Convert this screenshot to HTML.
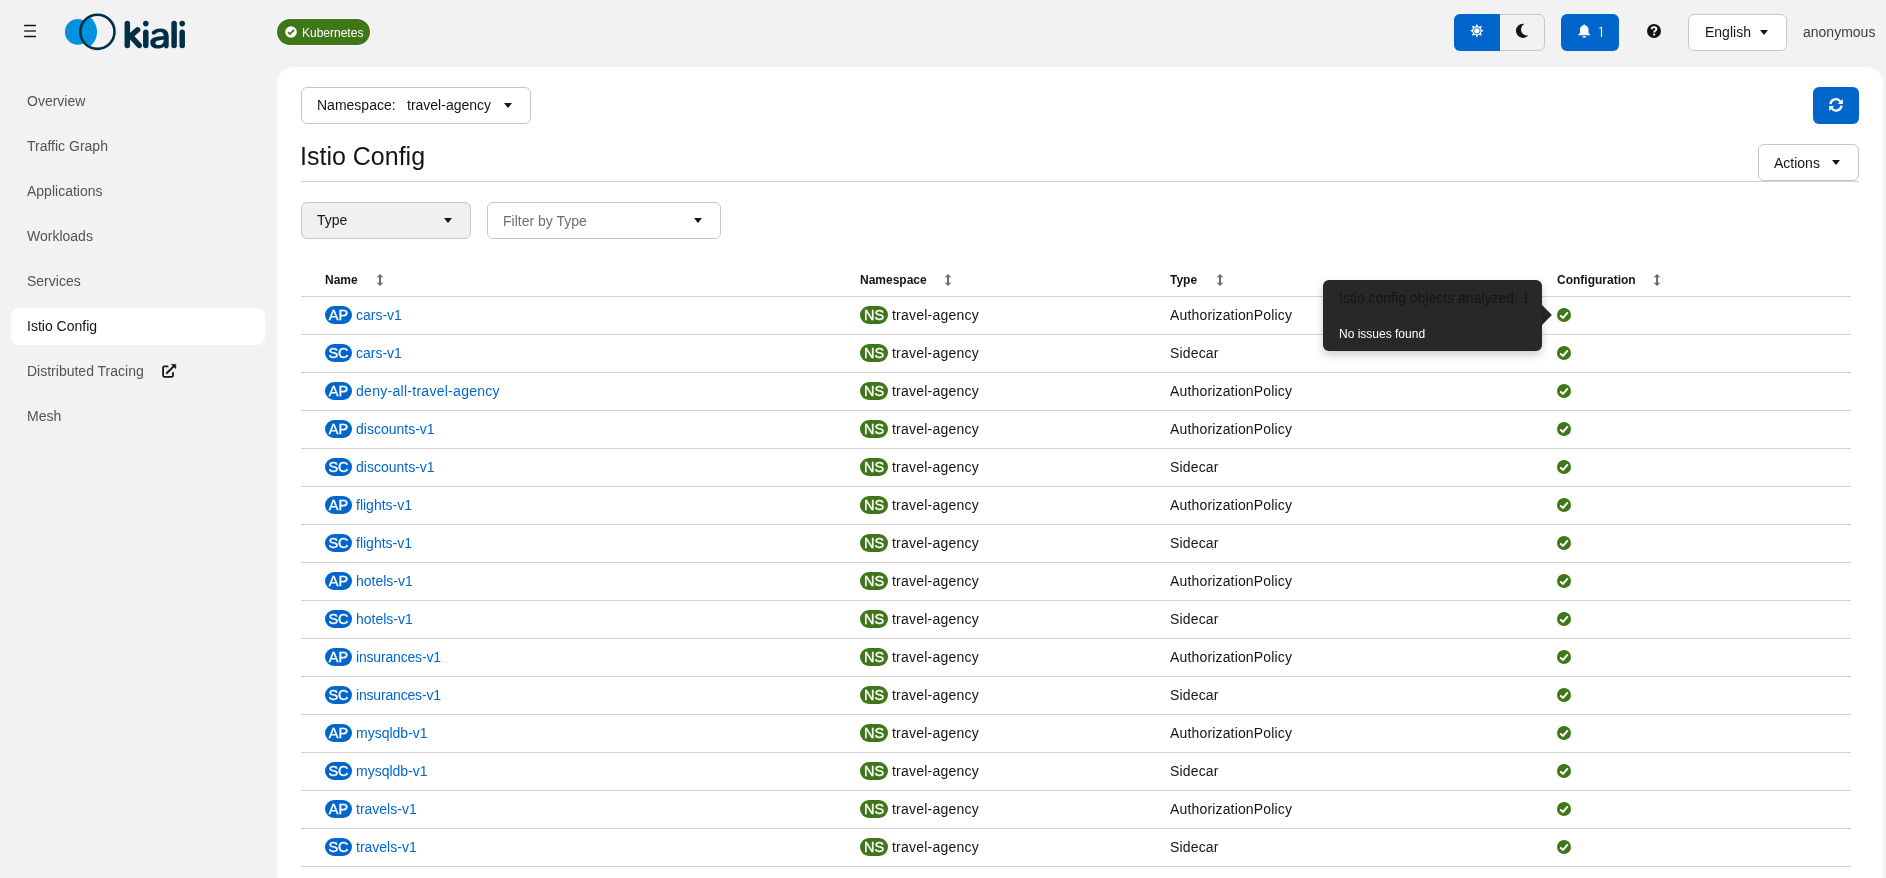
<!DOCTYPE html>
<html><head><meta charset="utf-8">
<style>
*{box-sizing:border-box;margin:0;padding:0}
html,body{width:1886px;height:878px;overflow:hidden;background:#f2f2f2;font-family:"Liberation Sans",sans-serif;color:#151515}
.a{position:absolute}
.t{position:absolute;white-space:nowrap;line-height:1}
.card{position:absolute;left:277px;top:67px;width:1606px;height:900px;background:#fff;border-radius:16px 16px 0 0}
.nav{position:absolute;left:27px;font-size:14px;color:#515457;white-space:nowrap;line-height:1}
.btnbox{position:absolute;border:1px solid #c7c7c7;border-radius:6px;background:#fff}
.caret{position:absolute;width:0;height:0;border-left:4px solid transparent;border-right:4px solid transparent;border-top:5px solid #151515}
.hline{position:absolute;left:301px;width:1550px;height:1px;background:#d2d2d2}
.th{position:absolute;font-size:12px;font-weight:bold;line-height:1;white-space:nowrap;color:#151515}
.badge{position:absolute;height:18px;border-radius:9px;color:#fff;font-size:14.5px;line-height:19px;text-align:center;-webkit-text-stroke:0.35px #fff}
.ap{background:#0066cc;width:27px;left:325px}
.ns{background:#3e7618;width:28px;left:860px}
.lnk{position:absolute;left:356px;font-size:14px;color:#0066cc;line-height:1;white-space:nowrap}
.nst{position:absolute;left:892px;font-size:14px;color:#151515;line-height:1;white-space:nowrap;letter-spacing:0.23px}
.typ{position:absolute;left:1170px;font-size:14px;color:#151515;line-height:1;white-space:nowrap;letter-spacing:0.16px}
.chk{position:absolute;left:1557px;width:14px;height:14px}
.sort{position:absolute;width:6px;height:12px}
</style></head>
<body><div id="app" style="position:absolute;left:0;top:0;width:1886px;height:878px;will-change:transform">
<!-- header -->
<svg class="a" style="left:18px;top:18px" width="26" height="26" viewBox="0 0 26 26"><g stroke="#151515" stroke-width="1.5" stroke-linecap="round"><path d="M6.7 7.4H17.4"/><path d="M6.7 12.9H17.4" stroke="#333"/><path d="M6.7 18.5H17.4"/></g></svg>

<svg class="a" style="left:0;top:0" width="200" height="64" viewBox="0 0 200 64">
  <defs><clipPath id="ringclip"><circle cx="97.4" cy="31.8" r="16"/></clipPath></defs>
  <circle cx="77.8" cy="31.9" r="12.9" fill="#0093dd"/>
  <circle cx="78.4" cy="31.8" r="18.7" fill="#0093dd" clip-path="url(#ringclip)"/>
  <circle cx="97.4" cy="31.8" r="17.1" fill="none" stroke="#012f47" stroke-width="2.6"/>
  <g fill="none" stroke="#012f47" stroke-width="5.5" stroke-linecap="round" stroke-linejoin="round">
    <path d="M127.3 23.6V45.4"/>
    <path d="M130 36.5L137.6 29.8"/>
    <path d="M132.5 38.2L139.2 45.4"/>
    <path d="M145.8 32.3V45.4"/>
    <path d="M174.1 23.6V45.4"/>
    <path d="M182.2 32.3V45.4"/>
  </g>
  <path fill="#012f47" fill-rule="evenodd" d="M151.8 33.6C151.5 32.3 152.3 31.3 153.5 30.6C155.3 29.3 157.3 28.4 160 28.4C165.5 28.4 168.7 31 168.7 36.5V45.8C168.7 47.3 167.7 48.4 166.4 48.4C165.2 48.4 164.4 47.6 164.2 46.4C162.5 47.8 160.2 48.6 157.3 48.6C153 48.6 150.3 46.3 150.3 42.6C150.3 38.6 153.8 37.2 158.5 36.6L163.7 35.9C163.6 33.4 162.3 32.1 160.2 32.1C158.2 32.1 156.8 32.8 155.3 34.1C154.2 35 152.3 34.9 151.8 33.6Z M163.6 39.5L158.6 40.4C156.7 40.8 155.4 41.4 155.4 42.9C155.4 44.2 156.5 45.1 158.3 45.1C161.6 45.1 163.6 43.3 163.6 40.9Z"/>
  <circle cx="145.8" cy="23.6" r="2.8" fill="#012f47"/>
  <circle cx="182.2" cy="23.6" r="2.8" fill="#012f47"/>
</svg>

<div class="a" style="left:277px;top:19px;width:93px;height:26px;border-radius:13px;background:#3e7618;box-shadow:0 0 0 1px rgba(255,255,255,0.7)"></div>
<svg class="a" style="left:285px;top:26px" width="12" height="12" viewBox="0 0 12 12"><circle cx="6" cy="6" r="5.8" fill="#fff"/><path d="M3 6.2 L5 8.1 L9 3.9" fill="none" stroke="#3e7618" stroke-width="1.8"/></svg>
<div class="t" style="left:302px;top:27px;font-size:12px;color:#fff">Kubernetes</div>

<div class="a" style="left:1454px;top:14px;width:91px;height:37px;border:1px solid #c7c7c7;border-radius:6px;background:#f2f2f2"></div>
<div class="a" style="left:1454px;top:14px;width:46px;height:37px;background:#0066cc;border-radius:6px 0 0 6px"></div>
<svg class="a" style="left:1465px;top:19px" width="24" height="24" viewBox="0 0 24 24"><g fill="#fff" transform="translate(11.9 11.8)"><polygon points="0,-7 1.5,-3.5 -1.5,-3.5"/><polygon points="0,7 1.5,3.5 -1.5,3.5"/><polygon points="-7,0 -3.5,1.5 -3.5,-1.5"/><polygon points="7,0 3.5,1.5 3.5,-1.5"/><polygon points="-5,-5 -1.4,-3.7 -3.7,-1.4"/><polygon points="5,-5 1.4,-3.7 3.7,-1.4"/><polygon points="-5,5 -1.4,3.7 -3.7,1.4"/><polygon points="5,5 1.4,3.7 3.7,1.4"/><circle r="4.6"/></g><circle cx="11.9" cy="11.8" r="3.2" fill="none" stroke="#0066cc" stroke-width="0.9"/></svg>
<svg class="a" style="left:1510px;top:20px" width="24" height="24" viewBox="0 0 24 24"><defs><mask id="moonm"><rect width="24" height="24" fill="#fff"/><circle cx="17" cy="9.5" r="6" fill="#000"/></mask></defs><circle cx="13" cy="10.8" r="7.1" fill="#151515" mask="url(#moonm)"/></svg>

<div class="a" style="left:1561px;top:14px;width:58px;height:37px;border-radius:6px;background:#0066cc"></div>
<svg class="a" style="left:1578px;top:24px" width="12.5" height="14.3" viewBox="0 0 14 16"><path d="M7 0.5c.8 0 1.2.5 1.2 1.2 2.4.5 3.6 2.4 3.6 4.8v3.2l1.8 2.2v.8H.4v-.8l1.8-2.2V6.5c0-2.4 1.2-4.3 3.6-4.8C5.8 1 6.2.5 7 .5z M5 13.6h4c0 1-.9 1.8-2 1.8s-2-.8-2-1.8z" fill="#fff"/></svg>
<svg class="a" style="left:1596px;top:25px" width="10" height="14" viewBox="0 0 10 14"><path d="M5.5 2V12" stroke="#fff" stroke-width="1.2" fill="none"/><path d="M5.7 2.1L3.3 3.4" stroke="#fff" stroke-width="1" fill="none"/></svg>

<svg class="a" style="left:1647px;top:24px" width="14" height="14" viewBox="0 0 14 14"><circle cx="7" cy="7" r="7" fill="#151515"/><path d="M4.7 5.3C4.7 3.9 5.7 3.1 7 3.1C8.4 3.1 9.4 3.9 9.4 5.1C9.4 6.6 7.1 6.8 7.1 8.4" fill="none" stroke="#fff" stroke-width="1.9"/><circle cx="7.1" cy="10.6" r="1.15" fill="#fff"/></svg>

<div class="btnbox" style="left:1688px;top:14px;width:99px;height:37px"></div>
<div class="t" style="left:1705px;top:25px;font-size:14px">English</div>
<div class="caret" style="left:1760px;top:30px"></div>
<div class="t" style="left:1803px;top:25px;font-size:14px;color:#3c3f42">anonymous</div>

<!-- sidebar -->
<div class="nav" style="top:94px">Overview</div>
<div class="nav" style="top:139px">Traffic Graph</div>
<div class="nav" style="top:184px">Applications</div>
<div class="nav" style="top:229px">Workloads</div>
<div class="nav" style="top:274px">Services</div>
<div class="a" style="left:11px;top:308px;width:254px;height:37px;border-radius:8px;background:#fff"></div>
<div class="nav" style="top:319px;color:#151515">Istio Config</div>
<div class="nav" style="top:364px">Distributed Tracing</div>
<svg class="a" style="left:155px;top:358px" width="30" height="27" viewBox="0 0 30 27"><path d="M12.6 8.4H9.3Q8.1 8.4 8.1 9.6V17.6Q8.1 18.8 9.3 18.8H16.8Q18 18.8 18 17.6V15" fill="none" stroke="#151515" stroke-width="1.8" stroke-linecap="round"/><path d="M11.7 15.2L18.6 8.4" stroke="#151515" stroke-width="1.9" stroke-linecap="round"/><path d="M16.4 6.4H20.8V10.7Z" fill="#151515" stroke="#151515" stroke-width="0.6" stroke-linejoin="round"/></svg>
<div class="nav" style="top:409px">Mesh</div>

<!-- card -->
<div class="card"></div>
<div class="btnbox" style="left:301px;top:87px;width:230px;height:37px"></div>
<div class="t" style="left:317px;top:98px;font-size:14px">Namespace:</div>
<div class="t" style="left:407px;top:98px;font-size:14px">travel-agency</div>
<div class="caret" style="left:504px;top:103px"></div>

<div class="a" style="left:1813px;top:87px;width:46px;height:37px;border-radius:6px;background:#0066cc"></div>
<svg class="a" style="left:1820px;top:92px" width="32" height="28" viewBox="0 0 32 28"><g fill="none" stroke="#fff" stroke-width="2.3"><path d="M10.5 12.2A5.45 5.45 0 0 1 20.4 9.6"/><path d="M21.5 13.6A5.45 5.45 0 0 1 11.6 16.2"/></g><g fill="#fff"><polygon points="22.8,6.9 22.8,11.9 17.8,11.9"/><polygon points="9.2,18.9 9.2,13.9 14.2,13.9"/></g></svg>

<div class="t" style="left:300px;top:144px;font-size:25px;color:#151515">Istio Config</div>
<div class="btnbox" style="left:1758px;top:144px;width:101px;height:37px"></div>
<div class="t" style="left:1774px;top:156px;font-size:14px">Actions</div>
<div class="caret" style="left:1832px;top:160px"></div>
<div class="a" style="left:301px;top:181px;width:1558px;height:1px;background:#d2d2d2"></div>

<div class="btnbox" style="left:301px;top:202px;width:170px;height:37px;background:#f0f0f0"></div>
<div class="t" style="left:317px;top:213px;font-size:14px">Type</div>
<div class="caret" style="left:444px;top:218px"></div>
<div class="btnbox" style="left:487px;top:202px;width:234px;height:37px"></div>
<div class="t" style="left:503px;top:214px;font-size:14px;color:#6a6e73">Filter by Type</div>
<div class="caret" style="left:694px;top:218px"></div>

<!-- table header -->
<div class="th" style="left:325px;top:274px">Name</div>
<div class="th" style="left:860px;top:274px">Namespace</div>
<div class="th" style="left:1170px;top:274px">Type</div>
<div class="th" style="left:1557px;top:274px">Configuration</div>
<div id="sorts"><svg class="sort" style="left:376px;top:274px;width:8px" viewBox="-1 0 8 12"><path d="M3 0 L6.3 3.3 H4 V8.7 H6.3 L3 12 L-0.3 8.7 H2 V3.3 H-0.3Z" fill="#6e6e6e"/></svg><svg class="sort" style="left:944px;top:274px;width:8px" viewBox="-1 0 8 12"><path d="M3 0 L6.3 3.3 H4 V8.7 H6.3 L3 12 L-0.3 8.7 H2 V3.3 H-0.3Z" fill="#6e6e6e"/></svg><svg class="sort" style="left:1216px;top:274px;width:8px" viewBox="-1 0 8 12"><path d="M3 0 L6.3 3.3 H4 V8.7 H6.3 L3 12 L-0.3 8.7 H2 V3.3 H-0.3Z" fill="#6e6e6e"/></svg><svg class="sort" style="left:1653px;top:274px;width:8px" viewBox="-1 0 8 12"><path d="M3 0 L6.3 3.3 H4 V8.7 H6.3 L3 12 L-0.3 8.7 H2 V3.3 H-0.3Z" fill="#6e6e6e"/></svg></div>
<div class="hline" style="top:296px"></div>
<div id="rows">
<div class="badge ap" style="top:306px">AP</div><div class="lnk" style="top:308px">cars-v1</div><div class="badge ns" style="top:306px">NS</div><div class="nst" style="top:308px">travel-agency</div><div class="typ" style="top:308px">AuthorizationPolicy</div><svg class="chk" style="top:308px" viewBox="0 0 14 14"><circle cx="7" cy="7" r="7" fill="#3e7618"/><path d="M3.2 7.4 L6 9.9 L10.8 4.3" fill="none" stroke="#fff" stroke-width="2"/></svg><div class="hline" style="top:334px"></div>
<div class="badge ap" style="top:344px">SC</div><div class="lnk" style="top:346px">cars-v1</div><div class="badge ns" style="top:344px">NS</div><div class="nst" style="top:346px">travel-agency</div><div class="typ" style="top:346px">Sidecar</div><svg class="chk" style="top:346px" viewBox="0 0 14 14"><circle cx="7" cy="7" r="7" fill="#3e7618"/><path d="M3.2 7.4 L6 9.9 L10.8 4.3" fill="none" stroke="#fff" stroke-width="2"/></svg><div class="hline" style="top:372px"></div>
<div class="badge ap" style="top:382px">AP</div><div class="lnk" style="top:384px;letter-spacing:0.28px">deny-all-travel-agency</div><div class="badge ns" style="top:382px">NS</div><div class="nst" style="top:384px">travel-agency</div><div class="typ" style="top:384px">AuthorizationPolicy</div><svg class="chk" style="top:384px" viewBox="0 0 14 14"><circle cx="7" cy="7" r="7" fill="#3e7618"/><path d="M3.2 7.4 L6 9.9 L10.8 4.3" fill="none" stroke="#fff" stroke-width="2"/></svg><div class="hline" style="top:410px"></div>
<div class="badge ap" style="top:420px">AP</div><div class="lnk" style="top:422px">discounts-v1</div><div class="badge ns" style="top:420px">NS</div><div class="nst" style="top:422px">travel-agency</div><div class="typ" style="top:422px">AuthorizationPolicy</div><svg class="chk" style="top:422px" viewBox="0 0 14 14"><circle cx="7" cy="7" r="7" fill="#3e7618"/><path d="M3.2 7.4 L6 9.9 L10.8 4.3" fill="none" stroke="#fff" stroke-width="2"/></svg><div class="hline" style="top:448px"></div>
<div class="badge ap" style="top:458px">SC</div><div class="lnk" style="top:460px">discounts-v1</div><div class="badge ns" style="top:458px">NS</div><div class="nst" style="top:460px">travel-agency</div><div class="typ" style="top:460px">Sidecar</div><svg class="chk" style="top:460px" viewBox="0 0 14 14"><circle cx="7" cy="7" r="7" fill="#3e7618"/><path d="M3.2 7.4 L6 9.9 L10.8 4.3" fill="none" stroke="#fff" stroke-width="2"/></svg><div class="hline" style="top:486px"></div>
<div class="badge ap" style="top:496px">AP</div><div class="lnk" style="top:498px">flights-v1</div><div class="badge ns" style="top:496px">NS</div><div class="nst" style="top:498px">travel-agency</div><div class="typ" style="top:498px">AuthorizationPolicy</div><svg class="chk" style="top:498px" viewBox="0 0 14 14"><circle cx="7" cy="7" r="7" fill="#3e7618"/><path d="M3.2 7.4 L6 9.9 L10.8 4.3" fill="none" stroke="#fff" stroke-width="2"/></svg><div class="hline" style="top:524px"></div>
<div class="badge ap" style="top:534px">SC</div><div class="lnk" style="top:536px">flights-v1</div><div class="badge ns" style="top:534px">NS</div><div class="nst" style="top:536px">travel-agency</div><div class="typ" style="top:536px">Sidecar</div><svg class="chk" style="top:536px" viewBox="0 0 14 14"><circle cx="7" cy="7" r="7" fill="#3e7618"/><path d="M3.2 7.4 L6 9.9 L10.8 4.3" fill="none" stroke="#fff" stroke-width="2"/></svg><div class="hline" style="top:562px"></div>
<div class="badge ap" style="top:572px">AP</div><div class="lnk" style="top:574px">hotels-v1</div><div class="badge ns" style="top:572px">NS</div><div class="nst" style="top:574px">travel-agency</div><div class="typ" style="top:574px">AuthorizationPolicy</div><svg class="chk" style="top:574px" viewBox="0 0 14 14"><circle cx="7" cy="7" r="7" fill="#3e7618"/><path d="M3.2 7.4 L6 9.9 L10.8 4.3" fill="none" stroke="#fff" stroke-width="2"/></svg><div class="hline" style="top:600px"></div>
<div class="badge ap" style="top:610px">SC</div><div class="lnk" style="top:612px">hotels-v1</div><div class="badge ns" style="top:610px">NS</div><div class="nst" style="top:612px">travel-agency</div><div class="typ" style="top:612px">Sidecar</div><svg class="chk" style="top:612px" viewBox="0 0 14 14"><circle cx="7" cy="7" r="7" fill="#3e7618"/><path d="M3.2 7.4 L6 9.9 L10.8 4.3" fill="none" stroke="#fff" stroke-width="2"/></svg><div class="hline" style="top:638px"></div>
<div class="badge ap" style="top:648px">AP</div><div class="lnk" style="top:650px;letter-spacing:-0.18px">insurances-v1</div><div class="badge ns" style="top:648px">NS</div><div class="nst" style="top:650px">travel-agency</div><div class="typ" style="top:650px">AuthorizationPolicy</div><svg class="chk" style="top:650px" viewBox="0 0 14 14"><circle cx="7" cy="7" r="7" fill="#3e7618"/><path d="M3.2 7.4 L6 9.9 L10.8 4.3" fill="none" stroke="#fff" stroke-width="2"/></svg><div class="hline" style="top:676px"></div>
<div class="badge ap" style="top:686px">SC</div><div class="lnk" style="top:688px;letter-spacing:-0.18px">insurances-v1</div><div class="badge ns" style="top:686px">NS</div><div class="nst" style="top:688px">travel-agency</div><div class="typ" style="top:688px">Sidecar</div><svg class="chk" style="top:688px" viewBox="0 0 14 14"><circle cx="7" cy="7" r="7" fill="#3e7618"/><path d="M3.2 7.4 L6 9.9 L10.8 4.3" fill="none" stroke="#fff" stroke-width="2"/></svg><div class="hline" style="top:714px"></div>
<div class="badge ap" style="top:724px">AP</div><div class="lnk" style="top:726px">mysqldb-v1</div><div class="badge ns" style="top:724px">NS</div><div class="nst" style="top:726px">travel-agency</div><div class="typ" style="top:726px">AuthorizationPolicy</div><svg class="chk" style="top:726px" viewBox="0 0 14 14"><circle cx="7" cy="7" r="7" fill="#3e7618"/><path d="M3.2 7.4 L6 9.9 L10.8 4.3" fill="none" stroke="#fff" stroke-width="2"/></svg><div class="hline" style="top:752px"></div>
<div class="badge ap" style="top:762px">SC</div><div class="lnk" style="top:764px">mysqldb-v1</div><div class="badge ns" style="top:762px">NS</div><div class="nst" style="top:764px">travel-agency</div><div class="typ" style="top:764px">Sidecar</div><svg class="chk" style="top:764px" viewBox="0 0 14 14"><circle cx="7" cy="7" r="7" fill="#3e7618"/><path d="M3.2 7.4 L6 9.9 L10.8 4.3" fill="none" stroke="#fff" stroke-width="2"/></svg><div class="hline" style="top:790px"></div>
<div class="badge ap" style="top:800px">AP</div><div class="lnk" style="top:802px">travels-v1</div><div class="badge ns" style="top:800px">NS</div><div class="nst" style="top:802px">travel-agency</div><div class="typ" style="top:802px">AuthorizationPolicy</div><svg class="chk" style="top:802px" viewBox="0 0 14 14"><circle cx="7" cy="7" r="7" fill="#3e7618"/><path d="M3.2 7.4 L6 9.9 L10.8 4.3" fill="none" stroke="#fff" stroke-width="2"/></svg><div class="hline" style="top:828px"></div>
<div class="badge ap" style="top:838px">SC</div><div class="lnk" style="top:840px">travels-v1</div><div class="badge ns" style="top:838px">NS</div><div class="nst" style="top:840px">travel-agency</div><div class="typ" style="top:840px">Sidecar</div><svg class="chk" style="top:840px" viewBox="0 0 14 14"><circle cx="7" cy="7" r="7" fill="#3e7618"/><path d="M3.2 7.4 L6 9.9 L10.8 4.3" fill="none" stroke="#fff" stroke-width="2"/></svg><div class="hline" style="top:866px"></div>
</div>
<!-- tooltip -->
<div class="a" style="left:1535px;top:308px;width:14px;height:14px;background:#282828;transform:rotate(45deg)"></div>
<div class="a" style="left:1323px;top:280px;width:219px;height:71px;background:#282828;border-radius:6px;box-shadow:0 4px 10px rgba(0,0,0,0.2)"></div>
<div class="t" style="left:1339px;top:291px;font-size:14px;color:#151515">Istio config objects analyzed: 1</div>
<div class="t" style="left:1339px;top:328px;font-size:12px;color:#fff">No issues found</div>

</div></body></html>
